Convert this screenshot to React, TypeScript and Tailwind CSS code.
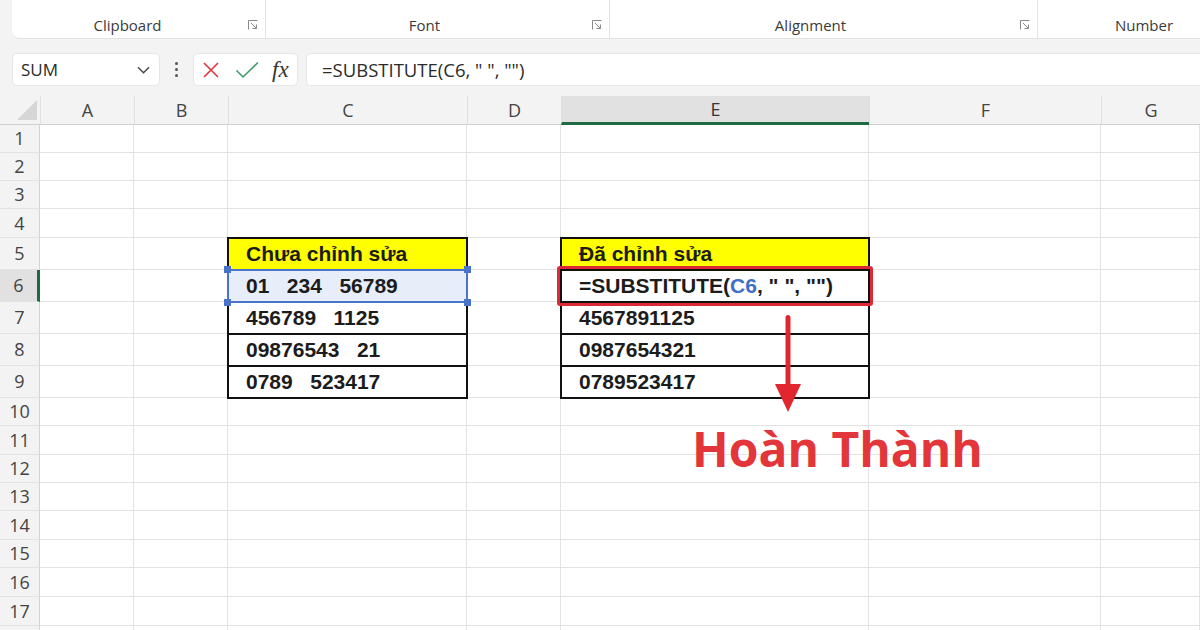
import React from 'react';

const cols = ['A', 'B', 'C', 'D', 'E', 'F', 'G'];
const rows = Array.from({ length: 17 }, (_, i) => i + 1);

function Launcher() {
  return (
    <svg width="10" height="10" viewBox="0 0 10 10" fill="none" stroke="#8a8a8a" strokeWidth="1">
      <path d="M0.5 9.5V0.5H9.5" />
      <path d="M3 3l5.5 5.5M8.5 4.5v4h-4" />
    </svg>
  );
}

function RibbonGroup({ label, width, pad, launcher = true, last = false }: { label: string; width: string; pad: string; launcher?: boolean; last?: boolean }) {
  return (
    <div className={`relative flex h-full items-start justify-center pt-[14px] ${pad} ${width} ${last ? '' : 'border-r border-[#e3e3e3]'}`}>
      <span className="text-[15px] leading-[22px] text-[#3b3b3b]">{label}</span>
      {launcher && (
        <span className="absolute bottom-[8px] right-[7px]">
          <Launcher />
        </span>
      )}
    </div>
  );
}

function DataTable({ title, items, edited, place }: { title: string; items: string[]; edited?: boolean; place: string }) {
  const row = 'flex min-h-0 flex-1 items-center pl-[17px]';
  return (
    <div className={`${place} z-10 -m-px flex min-h-0 flex-col border-2 border-[#111] font-['Liberation_Sans',Arial,sans-serif] text-[21px] font-bold leading-[24px] text-[#1c1c1c]`}>
      <div className={`${row} bg-[#ffff00]`}>{title}</div>
      {items.map((v, i) => {
        if (i === 0 && !edited) {
          return (
            <div key={i} className={`${row} relative border-t-2 border-[#111] bg-[#e8eef9]`}>
              <div className="pointer-events-none absolute -top-[2px] -bottom-[2px] -left-[2px] -right-[2px] border-2 border-[#4a74c9]" />
              <span className="absolute -left-[5px] -top-[5px] h-[7px] w-[7px] bg-[#4a74c9]" />
              <span className="absolute -right-[5px] -top-[5px] h-[7px] w-[7px] bg-[#4a74c9]" />
              <span className="absolute -left-[5px] -bottom-[5px] h-[7px] w-[7px] bg-[#4a74c9]" />
              <span className="absolute -right-[5px] -bottom-[5px] h-[7px] w-[7px] bg-[#4a74c9]" />
              <span className="whitespace-pre">{v}</span>
            </div>
          );
        }
        if (i === 0 && edited) {
          return (
            <div key={i} className={`${row} relative border-t-2 border-[#111] bg-white`}>
              <div className="pointer-events-none absolute -top-[5px] -bottom-[5px] -left-[5px] -right-[5px] rounded-[3px] border-[3px] border-[#dc2a36]" />
              <span className="whitespace-pre">
                =SUBSTITUTE(<span className="text-[#3f6fc6]">C6</span>, " ", "")
              </span>
            </div>
          );
        }
        return (
          <div key={i} className={`${row} border-t-2 border-[#111] bg-white`}>
            <span className="whitespace-pre">{v}</span>
          </div>
        );
      })}
    </div>
  );
}

// cells covered by the two tables
const inTable = (c: string, r: number) => (c === 'C' || c === 'E') && r >= 5 && r <= 9;

export default function App() {
  return (
    <div className="relative h-[630px] w-[1200px] overflow-hidden bg-[#f3f3f3] font-['Open_Sans','Noto_Sans',sans-serif]">
      {/* Ribbon */}
      <div className="ml-[12px] flex h-[39px] rounded-bl-[8px] border-b border-[#e2e2e2] bg-white">
        <RibbonGroup label="Clipboard" width="w-[254px]" pad="pr-[22px]" />
        <RibbonGroup label="Font" width="w-[344px]" pad="pr-[26px]" />
        <RibbonGroup label="Alignment" width="w-[428px]" pad="pr-[26px]" />
        <RibbonGroup label="Number" width="flex-1" pad="pl-[50px]" launcher={false} last />
      </div>

      {/* Formula bar */}
      <div className="mt-[14px] flex h-[33px] items-stretch">
        <div className="ml-[12px] flex w-[148px] items-center justify-between rounded-[5px] border border-[#e6e6e6] bg-white pl-[8px] pr-[9px]">
          <span className="text-[17px] text-[#2b2b2b]">SUM</span>
          <svg width="13" height="8" viewBox="0 0 13 8" fill="none" stroke="#444" strokeWidth="1.4">
            <path d="M1 1.2l5.5 5.5L12 1.2" />
          </svg>
        </div>
        <div className="flex w-[33px] flex-col items-center justify-center gap-[3px]">
          <span className="h-[3px] w-[3px] rounded-full bg-[#555]" />
          <span className="h-[3px] w-[3px] rounded-full bg-[#555]" />
          <span className="h-[3px] w-[3px] rounded-full bg-[#555]" />
        </div>
        <div className="flex w-[105px] items-center rounded-[5px] border border-[#e6e6e6] bg-white pl-[8px]">
          <svg width="18" height="18" viewBox="0 0 18 18" stroke="#e0353d" strokeWidth="1.6">
            <path d="M2 2l14 14M16 2L2 16" />
          </svg>
          <svg className="ml-[15px]" width="24" height="18" viewBox="0 0 24 18" fill="none" stroke="#3d9a6a" strokeWidth="1.6">
            <path d="M1.5 9.5l6.5 6.5L23 1.5" />
          </svg>
          <span className="ml-[13px] font-['Liberation_Serif',serif] text-[23px] italic leading-none text-[#333]">fx</span>
        </div>
        <div className="ml-[8px] flex flex-1 items-center rounded-l-[5px] border border-r-0 border-[#e6e6e6] bg-white pl-[15px]">
          <span className="whitespace-pre text-[18.5px] text-[#2b2b2b]">=SUBSTITUTE(C6, " ", "")</span>
        </div>
      </div>

      {/* Sheet grid */}
      <div className="mt-[10px] grid grid-cols-[40px_94px_94px_239px_94px_308px_232px_99px] grid-rows-[29px_28px_28px_28px_29px_32px_32px_32px_32px_32px_28px_29px_28px_28px_29px_28px_29px_29px_4px] text-[#444]">
        {/* header row */}
        <div className="relative border-b border-[#cfcfcf] bg-[#f3f3f3]">
          <div className="absolute bottom-[4px] right-[3px] h-0 w-0 border-b-[20px] border-l-[20px] border-b-[#d6d6d6] border-l-transparent" />
        </div>
        {cols.map((c) => (
          <div
            key={c}
            className={`flex items-center justify-center text-[18px] ${
              c === 'E'
                ? 'border-b-[3px] border-b-[#1e6b43] bg-[#e1e1e1] text-[#333]'
                : 'border-b border-b-[#cfcfcf] bg-[#f3f3f3]'
            } border-l border-l-[#e0e0e0]`}
          >
            {c}
          </div>
        ))}
        {/* rows */}
        {rows.map((r) => (
          <React.Fragment key={r}>
            <div
              className={`flex items-center justify-center text-[18px] ${
                r === 6 ? 'border-r-[3px] border-r-[#1e6b43] bg-[#e1e1e1]' : 'border-r border-r-[#d4d4d4] bg-[#f3f3f3]'
              } border-b border-b-[#e3e3e3]`}
            >
              {r}
            </div>
            {cols.map((c) =>
              inTable(c, r) ? null : <div key={c} className="border-b border-r border-[#e3e3e3] bg-white" />
            )}
          </React.Fragment>
        ))}
        <div className="border-r border-r-[#d4d4d4] bg-[#f3f3f3]" />
        {cols.map((c) => (
          <div key={c} className="border-r border-[#e3e3e3] bg-white" />
        ))}

        {/* tables */}
        <DataTable
          place="col-start-4 row-start-6 row-span-5"
          title="Chưa chỉnh sửa"
          items={['01   234   56789', '456789   1125', '09876543   21', '0789   523417']}
        />
        <DataTable
          place="col-start-6 row-start-6 row-span-5"
          title="Đã chỉnh sửa"
          items={['', '4567891125', '0987654321', '0789523417']}
          edited
        />
      </div>

      {/* Arrow */}
      <svg className="absolute left-[775px] top-[314px] z-20" width="26" height="99" viewBox="0 0 26 99">
        <rect x="10.5" y="1" width="5" height="75" rx="2.5" fill="#e2262f" />
        <polygon points="0,70 26,70 13,98" fill="#e2262f" />
      </svg>

      {/* Label */}
      <div className="absolute left-[692px] top-[416px] z-20 font-['Open_Sans',sans-serif] text-[48px] font-bold leading-[66px] text-[#e2363b]">
        Hoàn Thành
      </div>
    </div>
  );
}
